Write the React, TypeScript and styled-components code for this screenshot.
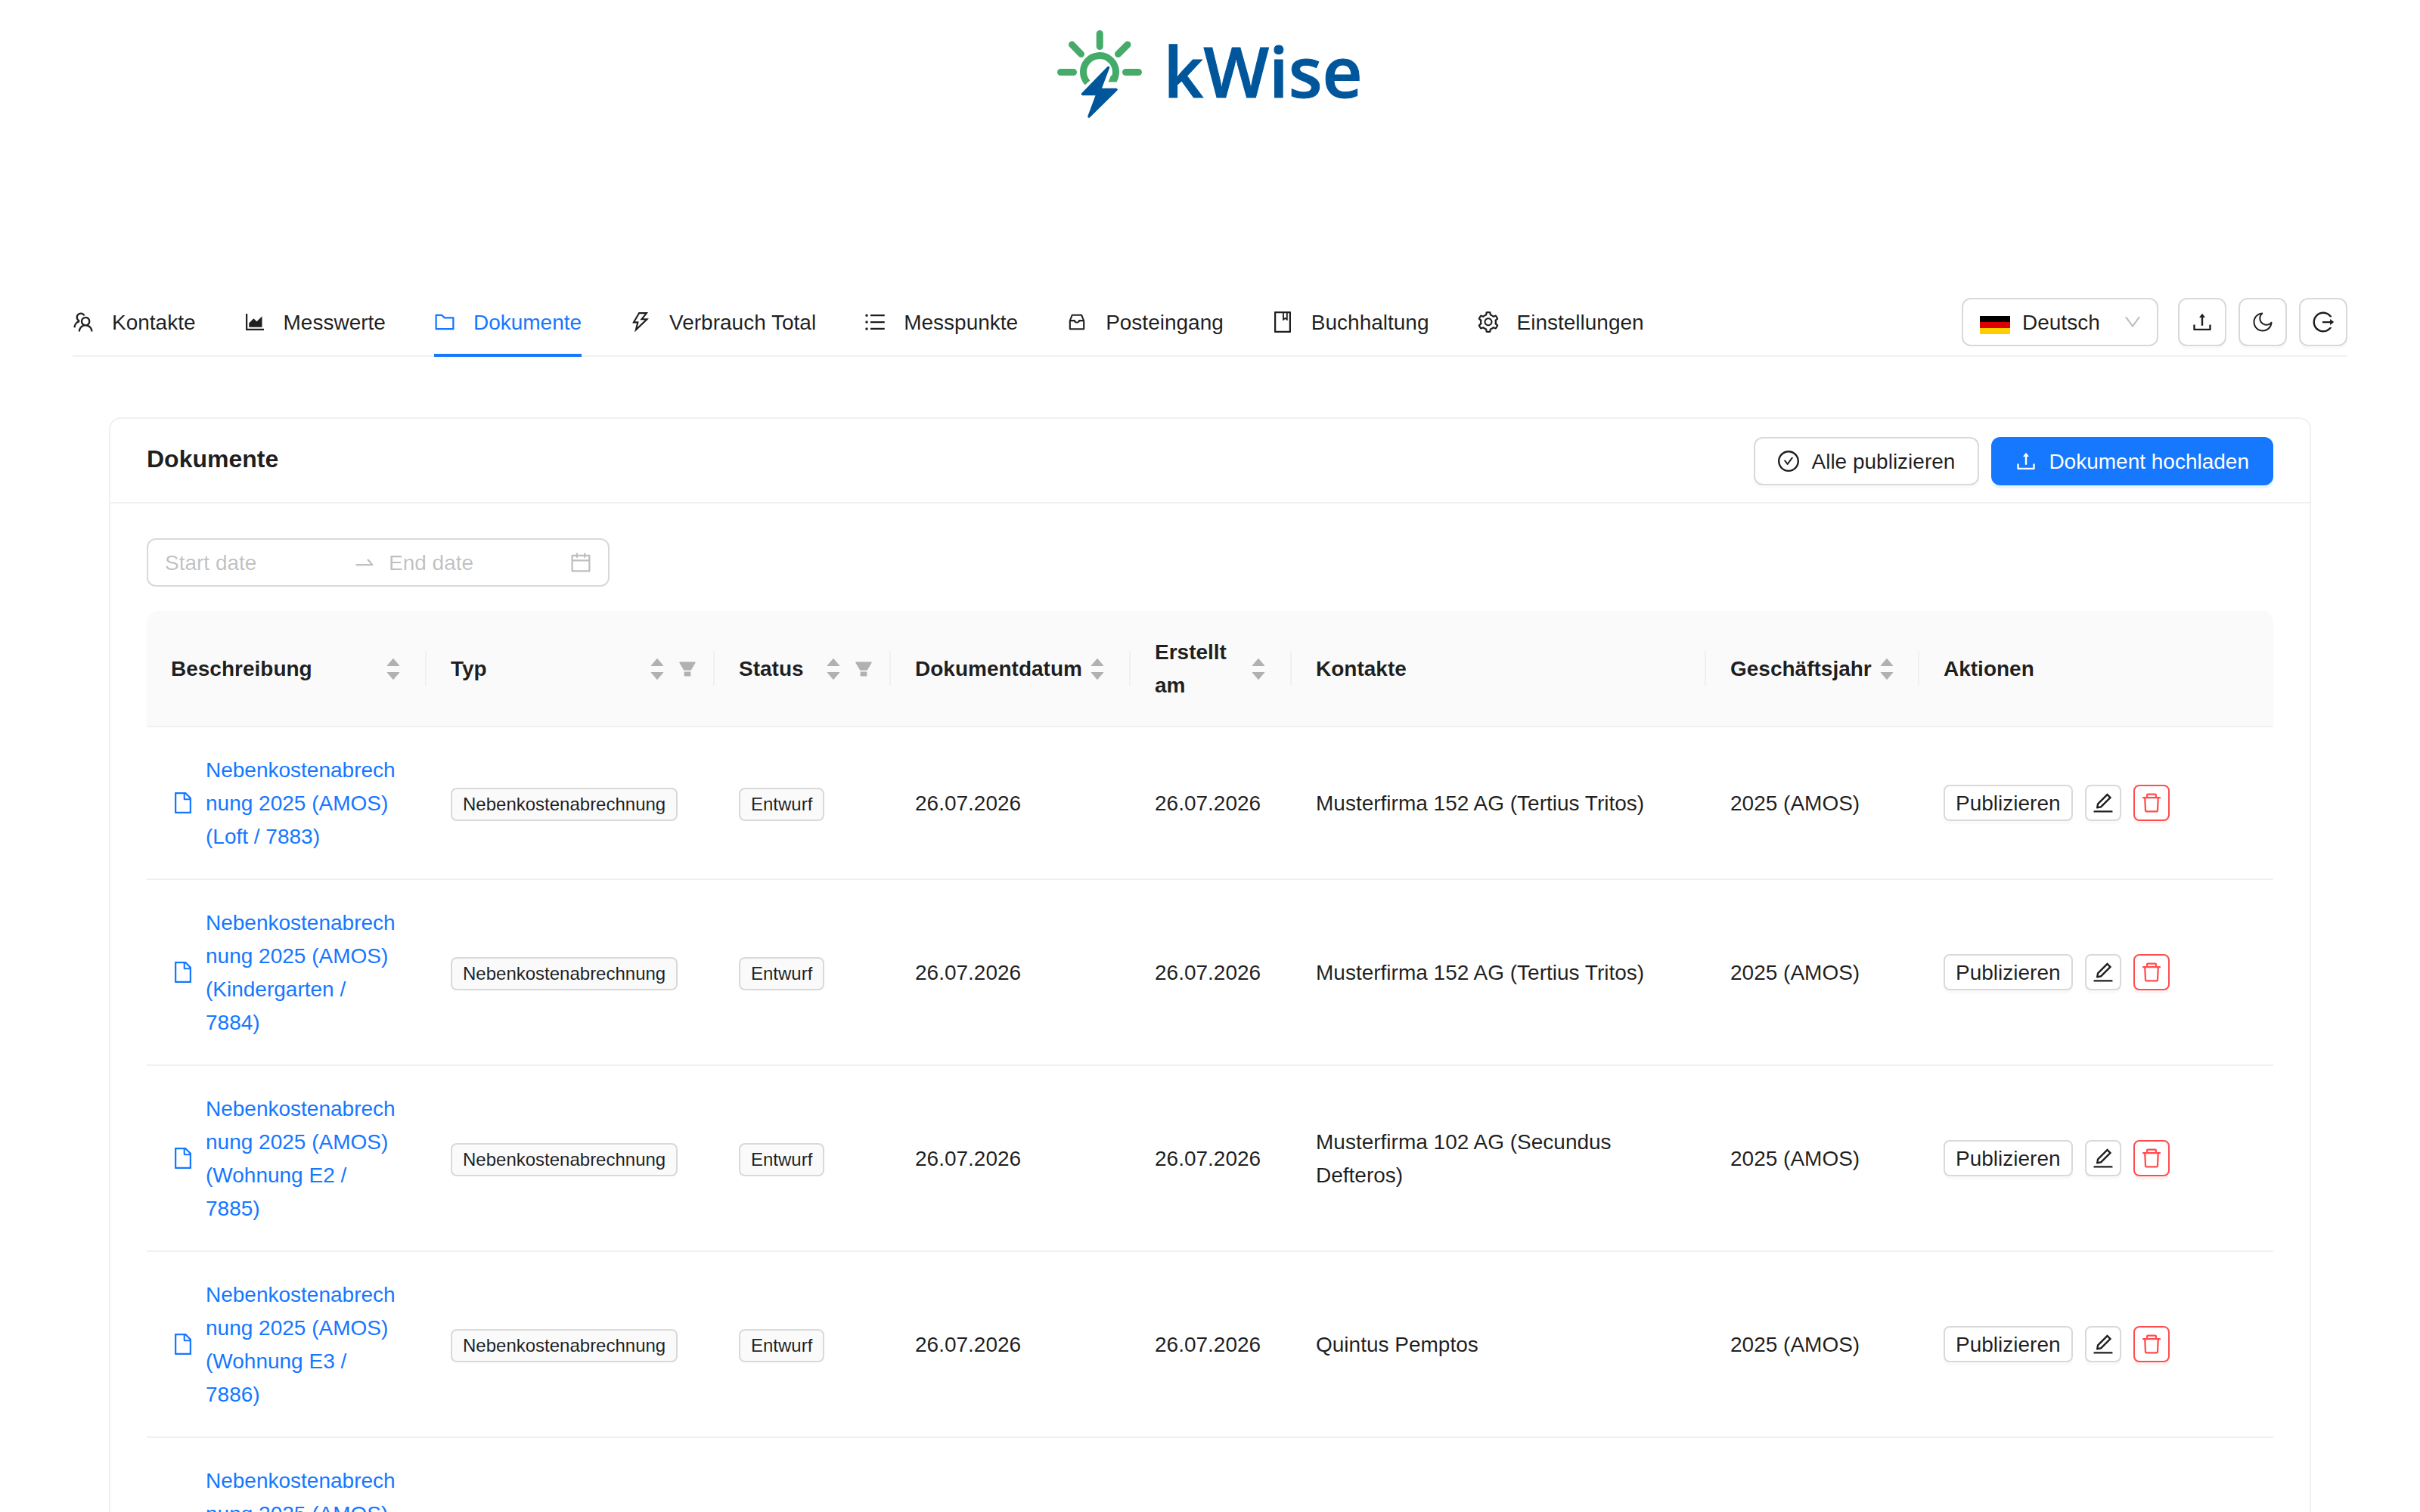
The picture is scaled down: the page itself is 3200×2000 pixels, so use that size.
import { ReactNode } from "react";
import styled, { createGlobalStyle } from "styled-components";
import { IconType } from "react-icons";
import
{
    AiFillFilter,
    AiOutlineAreaChart,
    AiOutlineBook,
    AiOutlineCalendar,
    AiOutlineCheckCircle,
    AiOutlineDelete,
    AiOutlineDown,
    AiOutlineEdit,
    AiOutlineFile,
    AiOutlineFolder,
    AiOutlineInbox,
    AiOutlineLogout,
    AiOutlineMoon,
    AiOutlineSetting,
    AiOutlineSwapRight,
    AiOutlineTeam,
    AiOutlineThunderbolt,
    AiOutlineUnorderedList,
    AiOutlineUpload,
    AiFillCaretDown,
    AiFillCaretUp
} from "react-icons/ai";

const GlobalStyle = createGlobalStyle`
    *, *::before, *::after {
        box-sizing: border-box;
    }

    body {
        margin: 0;
        background: #ffffff;
        color: rgba(0, 0, 0, 0.88);
        font-family: "Liberation Sans", Arial, sans-serif;
        font-size: 28px;
        line-height: 44px;
    }

    button, input, select {
        font: inherit;
        color: inherit;
        margin: 0;
    }

    svg {
        display: block;
        flex: none;
    }
`;

const Page = styled.div`
    padding: 0 96px;
`;

const LogoBar = styled.header`
    display: flex;
    justify-content: center;
    align-items: flex-start;
    gap: 28px;
    height: 380px;
    padding-top: 40px;
`;

const LogoText = styled.span`
    color: #00569b;
    font-family: "Open Sans", "Noto Sans", sans-serif;
    font-size: 92px;
    font-weight: 600;
    line-height: 108px;
    -webkit-text-stroke: 1px #00569b;
`;

const NavBar = styled.div`
    display: flex;
    justify-content: space-between;
    align-items: center;
    border-bottom: 2px solid #f0f0f0;
`;

const Tabs = styled.nav`
    display: flex;
    gap: 64px;
    margin-bottom: -2px;
`;

const Label = styled.span`
    display: block;
    padding-top: 2px;
`;

const Tab = styled.a<{ $active?: boolean }>`
    display: flex;
    align-items: center;
    gap: 24px;
    padding: 23px 0 19px;
    border-bottom: 4px solid ${p => p.$active ? "#1677ff" : "transparent"};
    color: ${p => p.$active ? "#1677ff" : "inherit"};
    text-decoration: none;
`;

const NavExtra = styled.div`
    display: flex;
    gap: 16px;
    padding-top: 2px;
`;

const LanguageBox = styled.label`
    display: flex;
    align-items: center;
    width: 260px;
    height: 64px;
    margin-right: 10px;
    padding: 0 20px 0 22px;
    border: 2px solid #d9d9d9;
    border-radius: 12px;
    color: rgba(0, 0, 0, 0.25);
`;

const Flag = styled.span`
    padding-top: 8px;
`;

const LanguageSelect = styled.select`
    flex: 1;
    min-width: 0;
    height: 60px;
    padding: 2px 0 0 16px;
    border: none;
    outline: none;
    background: transparent;
    color: rgba(0, 0, 0, 0.88);
    appearance: none;
`;

const Button = styled.button<{ $variant?: "primary" | "danger"; $small?: boolean; $square?: boolean }>`
    display: inline-flex;
    justify-content: center;
    align-items: center;
    gap: 16px;
    height: ${p => p.$small ? 48 : 64}px;
    width: ${p => p.$square ? ( p.$small ? "48px" : "64px" ) : "auto"};
    padding: 0 ${p => p.$square ? 0 : p.$small ? 14 : 30}px;
    border: 2px solid ${p => p.$variant === "primary" ? "#1677ff" : p.$variant === "danger" ? "#ff4d4f" : "#d9d9d9"};
    border-radius: ${p => p.$small ? 8 : 12}px;
    background: ${p => p.$variant === "primary" ? "#1677ff" : "#ffffff"};
    color: ${p => p.$variant === "primary" ? "#ffffff" : p.$variant === "danger" ? "#ff4d4f" : "rgba(0, 0, 0, 0.88)"};
    box-shadow: 0 4px 0 ${p => p.$variant === "primary" ? "rgba(5, 145, 255, 0.1)" : p.$variant === "danger" ? "rgba(255, 38, 5, 0.06)" : "rgba(0, 0, 0, 0.02)"};
    white-space: nowrap;
    cursor: pointer;
`;

const Card = styled.main`
    margin: 80px 48px 0;
    border: 2px solid #f0f0f0;
    border-radius: 16px;
`;

const CardHead = styled.div`
    display: flex;
    justify-content: space-between;
    align-items: center;
    height: 112px;
    padding: 2px 48px 0;
    border-bottom: 2px solid #f0f0f0;
`;

const CardTitle = styled.h1`
    margin: 0;
    padding-bottom: 6px;
    font-size: 32px;
    font-weight: 700;
`;

const ButtonRow = styled.div`
    display: flex;
    gap: 16px;
`;

const CardBody = styled.div`
    padding: 46px 48px 48px;
`;

const DateRange = styled.div`
    display: flex;
    align-items: center;
    width: 612px;
    height: 64px;
    margin-bottom: 32px;
    padding: 0 22px;
    border: 2px solid #d9d9d9;
    border-radius: 12px;
    color: rgba(0, 0, 0, 0.25);
`;

const DateInput = styled.input`
    flex: 1;
    min-width: 0;
    padding: 2px 0 0;
    border: none;
    outline: none;
    background: transparent;

    &::placeholder {
        color: rgba(0, 0, 0, 0.25);
        opacity: 1;
    }
`;

const DateSeparator = styled.span`
    padding: 0 16px;
`;

const CalendarSlot = styled.span`
    padding-left: 8px;
`;

const Table = styled.table`
    width: 100%;
    border-collapse: separate;
    border-spacing: 0;
    table-layout: fixed;
`;

const HeadCell = styled.th`
    position: relative;
    padding: 33px 32px 31px;
    border-bottom: 2px solid #f0f0f0;
    background: #fafafa;
    font-weight: 700;
    text-align: left;

    &:first-child {
        border-top-left-radius: 16px;
    }

    &:last-child {
        border-top-right-radius: 16px;
    }

    &:not(:last-child)::after {
        content: "";
        position: absolute;
        top: 50%;
        right: 0;
        width: 2px;
        height: 46px;
        margin-top: -23px;
        background: #f0f0f0;
    }
`;

const HeadContent = styled.div<{ $filter?: boolean }>`
    display: flex;
    align-items: center;
    justify-content: space-between;
    gap: 8px;
    margin-right: ${p => p.$filter ? "-8px" : "0"};
`;

const HeadIcons = styled.span`
    display: flex;
    align-items: center;
    gap: 16px;
    color: rgba(0, 0, 0, 0.29);
`;

const Sorter = styled.span`
    display: flex;
    flex-direction: column;

    svg + svg {
        margin-top: -6px;
    }
`;

const Cell = styled.td`
    padding: 33px 32px;
    border-bottom: 2px solid #f0f0f0;
    vertical-align: middle;
`;

const FileLink = styled.a`
    display: flex;
    align-items: center;
    gap: 16px;
    padding: 0 2px;
    color: #1677ff;
    text-decoration: none;
    overflow-wrap: anywhere;
`;

const Tag = styled.span`
    display: block;
    width: fit-content;
    margin-top: 4px;
    padding: 0 14px;
    border: 2px solid #d9d9d9;
    border-radius: 8px;
    background: #fafafa;
    font-size: 24px;
    line-height: 40px;
    white-space: nowrap;
`;

interface IconProps
{
    icon: IconType;
    size?: number;
    margin?: boolean;
}

// most ant icons are drawn with a 64 unit margin, crop it off unless it is wanted
const Icon = ( { icon: Svg, size = 28, margin }: IconProps ) =>
    <Svg size={size} viewBox={margin ? "0 0 1024 1024" : "64 64 896 896"} aria-hidden />;

const tabs: { label: string; icon: IconType; margin?: boolean }[] = [
    { label: "Kontakte", icon: AiOutlineTeam },
    { label: "Messwerte", icon: AiOutlineAreaChart },
    { label: "Dokumente", icon: AiOutlineFolder },
    { label: "Verbrauch Total", icon: AiOutlineThunderbolt },
    { label: "Messpunkte", icon: AiOutlineUnorderedList },
    { label: "Posteingang", icon: AiOutlineInbox, margin: true },
    { label: "Buchhaltung", icon: AiOutlineBook },
    { label: "Einstellungen", icon: AiOutlineSetting }
];

interface Column
{
    title: string;
    width: number;
    sort?: boolean;
    filter?: boolean;
}

const columns: Column[] = [
    { title: "Beschreibung", width: 370, sort: true },
    { title: "Typ", width: 381, sort: true, filter: true },
    { title: "Status", width: 233, sort: true, filter: true },
    { title: "Dokumentdatum", width: 317, sort: true },
    { title: "Erstellt am", width: 213, sort: true },
    { title: "Kontakte", width: 548 },
    { title: "Geschäftsjahr", width: 282, sort: true },
    { title: "Aktionen", width: 468 }
];

const documents = [
    { unit: "Loft / 7883", contact: "Musterfirma 152 AG (Tertius Tritos)" },
    { unit: "Kindergarten / 7884", contact: "Musterfirma 152 AG (Tertius Tritos)" },
    { unit: "Wohnung E2 / 7885", contact: "Musterfirma 102 AG (Secundus Defteros)" },
    { unit: "Wohnung E3 / 7886", contact: "Quintus Pemptos" },
    { unit: "Wohnung E4 / 7887", contact: "Quintus Pemptos" }
];

const LogoMark = () => (
    <svg width="112" height="117" viewBox="0 0 112 117" aria-hidden>
        <g fill="none" stroke="#44ab69" strokeWidth="9" strokeLinecap="round">
            <path d="M56.2 4.500V21.500M4.500 55.500H21.500M90.500 55.500H107.500M19.500 19L31.500 31.500M93 19L80.500 31.500" />
            <path strokeLinecap="butt" d="M40 69.500A21.500 21.500 0 1 1 74.500 66" />
        </g>
        <path d="M67.500 68.500H78.500L81 62L71 60Z" fill="#44ab69" />
        <path
            d="M67.500 49.500L33.500 84.500H53L42 114L78 78.500H56.500Z"
            fill="#00569b"
            stroke="#00569b"
            strokeWidth="3.500"
            strokeLinejoin="round"
        />
    </svg>
);

const GermanFlag = () => (
    <svg width="40" height="24" viewBox="0 0 5 3" preserveAspectRatio="none" aria-hidden>
        <path fill="#000000" d="M0 0h5v1H0z" />
        <path fill="#dd0000" d="M0 1h5v1H0z" />
        <path fill="#ffce00" d="M0 2h5v1H0z" />
    </svg>
);

const HeaderTitle = ( { column }: { column: Column } ) =>
{
    if( !column.sort )
    {
        return <>{column.title}</>;
    }

    return (
        <HeadContent $filter={column.filter}>
            <span>{column.title}</span>
            <HeadIcons>
                <Sorter>
                    <AiFillCaretUp size={24} />
                    <AiFillCaretDown size={24} />
                </Sorter>
                {column.filter && <Icon icon={AiFillFilter} size={24} />}
            </HeadIcons>
        </HeadContent>
    );
}

const App = () =>
{
    const iconButton = ( label: string, icon: ReactNode ) =>
        <Button $square type="button" aria-label={label}>{icon}</Button>;

    return (
        <>
            <GlobalStyle />
            <Page>
                <LogoBar>
                    <LogoMark />
                    <LogoText>kWise</LogoText>
                </LogoBar>
                <NavBar>
                    <Tabs>
                        {tabs.map( tab => (
                            <Tab key={tab.label} href="#" $active={tab.label === "Dokumente"}>
                                <Icon icon={tab.icon} margin={tab.margin} />
                                <Label>{tab.label}</Label>
                            </Tab>
                        ) )}
                    </Tabs>
                    <NavExtra>
                        <LanguageBox>
                            <Flag><GermanFlag /></Flag>
                            <LanguageSelect aria-label="Sprache">
                                <option>Deutsch</option>
                            </LanguageSelect>
                            <Icon icon={AiOutlineDown} size={24} />
                        </LanguageBox>
                        {iconButton( "Hochladen", <Icon icon={AiOutlineUpload} /> )}
                        {iconButton( "Dunkler Modus", <Icon icon={AiOutlineMoon} /> )}
                        {iconButton( "Abmelden", <Icon icon={AiOutlineLogout} /> )}
                    </NavExtra>
                </NavBar>
                <Card>
                    <CardHead>
                        <CardTitle>Dokumente</CardTitle>
                        <ButtonRow>
                            <Button type="button">
                                <Icon icon={AiOutlineCheckCircle} />
                                <Label>Alle publizieren</Label>
                            </Button>
                            <Button type="button" $variant="primary">
                                <Icon icon={AiOutlineUpload} />
                                <Label>Dokument hochladen</Label>
                            </Button>
                        </ButtonRow>
                    </CardHead>
                    <CardBody>
                        <DateRange>
                            <DateInput placeholder="Start date" aria-label="Start date" />
                            <DateSeparator>
                                <AiOutlineSwapRight size={32} />
                            </DateSeparator>
                            <DateInput placeholder="End date" aria-label="End date" />
                            <CalendarSlot>
                                <Icon icon={AiOutlineCalendar} />
                            </CalendarSlot>
                        </DateRange>
                        <Table>
                            <colgroup>
                                {columns.map( column => <col key={column.title} width={column.width} /> )}
                            </colgroup>
                            <thead>
                                <tr>
                                    {columns.map( column => (
                                        <HeadCell key={column.title} scope="col">
                                            <HeaderTitle column={column} />
                                        </HeadCell>
                                    ) )}
                                </tr>
                            </thead>
                            <tbody>
                                {documents.map( doc => (
                                    <tr key={doc.unit}>
                                        <Cell>
                                            <FileLink href="#">
                                                <Icon icon={AiOutlineFile} />
                                                <Label>{`Nebenkostenabrechnung 2025 (AMOS) (${doc.unit})`}</Label>
                                            </FileLink>
                                        </Cell>
                                        <Cell><Tag>Nebenkostenabrechnung</Tag></Cell>
                                        <Cell><Tag>Entwurf</Tag></Cell>
                                        <Cell><Label>26.07.2026</Label></Cell>
                                        <Cell><Label>26.07.2026</Label></Cell>
                                        <Cell><Label>{doc.contact}</Label></Cell>
                                        <Cell><Label>2025 (AMOS)</Label></Cell>
                                        <Cell>
                                            <ButtonRow>
                                                <Button type="button" $small><Label>Publizieren</Label></Button>
                                                <Button type="button" $small $square aria-label="Bearbeiten">
                                                    <Icon icon={AiOutlineEdit} />
                                                </Button>
                                                <Button type="button" $small $square $variant="danger" aria-label="Löschen">
                                                    <Icon icon={AiOutlineDelete} />
                                                </Button>
                                            </ButtonRow>
                                        </Cell>
                                    </tr>
                                ) )}
                            </tbody>
                        </Table>
                    </CardBody>
                </Card>
            </Page>
        </>
    );
}

export default App;
